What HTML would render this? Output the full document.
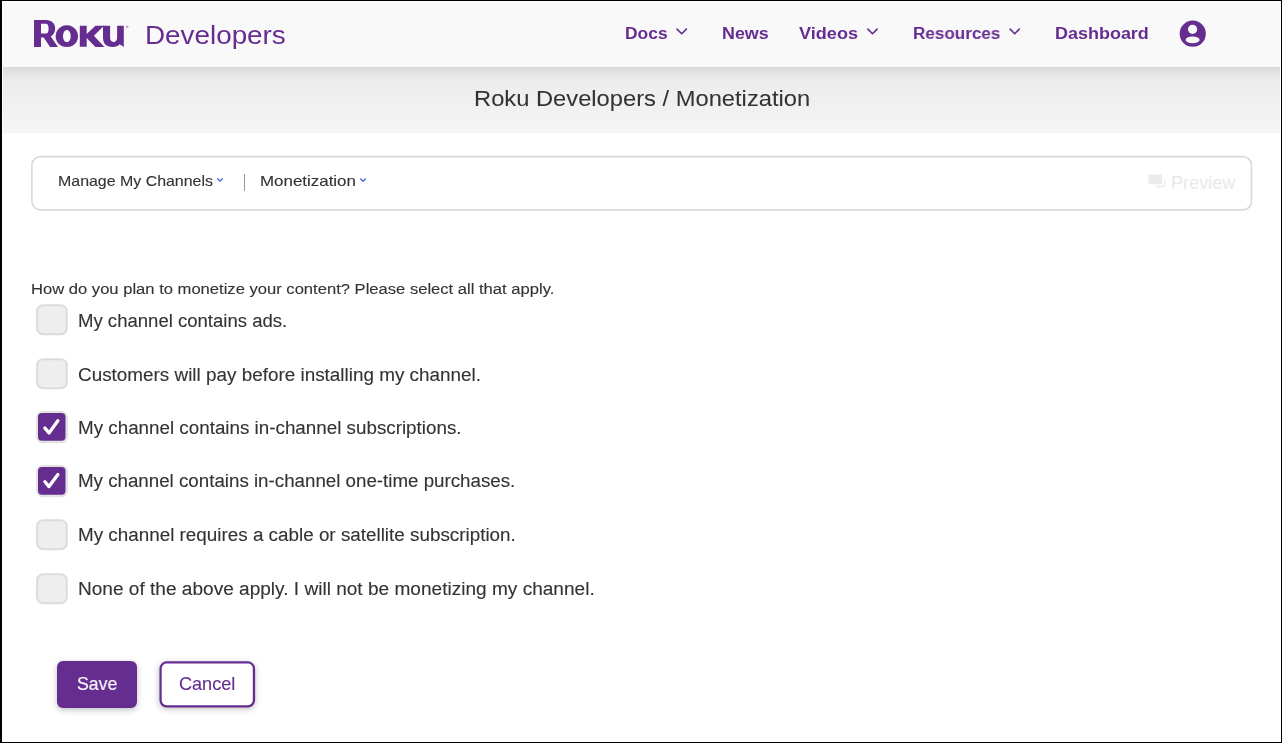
<!DOCTYPE html>
<html><head><meta charset="utf-8"><style>
html,body{margin:0;padding:0;}
body{width:1282px;height:743px;background:#000;position:relative;overflow:hidden;font-family:"Liberation Sans",sans-serif;}
.page{position:absolute;left:2px;top:1px;width:1279px;height:741px;background:#fff;overflow:hidden;}
.abs{position:absolute;}
.t{position:absolute;white-space:nowrap;line-height:1;will-change:transform;transform-origin:0 0;}
</style></head><body>
<div class="page"></div>
<div class="abs" style="left:3px;top:67px;width:1277px;height:66px;background:linear-gradient(#e9e9e9 0%,#eeeeee 35%,#f5f5f5 100%);"></div>
<div class="abs" style="left:3px;top:2px;width:1277px;height:65px;background:#f9f9f9;"></div>
<div class="abs" style="left:3px;top:67px;width:1277px;height:14px;background:linear-gradient(rgba(0,0,0,0.075),rgba(0,0,0,0.035) 35%,rgba(0,0,0,0));"></div>
<!-- card -->
<svg class="abs" style="left:0;top:0" width="1282" height="230"><rect x="31.9" y="156.6" width="1219.6" height="53.3" rx="8.5" ry="8.5" fill="#fff" stroke="#d9d9d9" stroke-width="1.6"/></svg>
<div class="abs" style="left:244px;top:174px;width:1px;height:17px;background:#999;"></div>
<!-- checkboxes -->
<svg class="abs" style="left:0;top:0" width="100" height="743">
<rect x="37.1" y="305.2" width="29.7" height="29.1" rx="6" fill="#eeeeee" stroke="#dcdcdc" stroke-width="2"/>
<rect x="37.1" y="359.2" width="29.7" height="29.1" rx="6" fill="#eeeeee" stroke="#dcdcdc" stroke-width="2"/>
<rect x="37.1" y="412.0" width="29.9" height="30.3" rx="5.5" fill="#e3e4e1" stroke="#e2e3e0" stroke-width="2"/>
<rect x="38" y="413.0" width="27.5" height="27.8" rx="4" fill="#662d91"/>
<rect x="37.1" y="466.0" width="29.9" height="30.3" rx="5.5" fill="#e3e4e1" stroke="#e2e3e0" stroke-width="2"/>
<rect x="38" y="467.0" width="27.5" height="27.8" rx="4" fill="#662d91"/>
<rect x="37.1" y="520.2" width="29.7" height="29.1" rx="6" fill="#eeeeee" stroke="#dcdcdc" stroke-width="2"/>
<rect x="37.1" y="574.2" width="29.7" height="29.1" rx="6" fill="#eeeeee" stroke="#dcdcdc" stroke-width="2"/>
</svg>

<!-- buttons -->
<div class="abs" style="left:57px;top:661px;width:80px;height:47px;border-radius:6px;background:#662d91;box-shadow:0 2px 6px rgba(0,0,0,0.25);"></div>
<div class="abs" style="left:159.4px;top:661.3px;width:95.7px;height:46.2px;border-radius:7px;background:#fff;box-shadow:0 2px 6px rgba(0,0,0,0.25);"></div>
<svg class="abs" style="left:0;top:640px" width="300" height="90"><rect x="160.55" y="22.45" width="93.4" height="43.9" rx="6" ry="6" fill="#fff" stroke="#662d91" stroke-width="2.3"/></svg>
<svg class="abs" style="left:0;top:0" width="1282" height="743" viewBox="0 0 1282 743">
<!-- Roku logo -->
<g fill="#662d91">
<path d="M34 20 H46 C51.5 20 55.2 23.5 55.2 28.5 C55.2 32.5 53 35.3 50.8 36.6 L58 47 H50.1 L43.7 37.5 H41 V47 H34 Z M41 23.8 V33.6 H46 C47.8 33.6 48.6 31.5 48.6 28.7 C48.6 25.9 47.8 23.8 46 23.8 Z" fill-rule="evenodd"/>
<path d="M66.85 25.2 A11.25 10.95 0 1 1 66.84 25.2 Z M66.85 30 A3.85 6.15 0 1 0 66.86 30 Z" fill-rule="evenodd"/>
<path d="M79.8 25.7 H86.7 V33.9 L95.4 25.7 H104 L93.9 35.8 L104.4 46.9 H95.4 L86.7 38.1 V46.7 H79.8 Z"/>
<path d="M103 25.7 H110.1 V37.5 C110.1 40.6 111.4 41.9 113.6 41.9 C115.8 41.9 117.1 40.6 117.1 37.5 V25.7 H123.8 V46.9 L119.6 44.2 C118.2 46 115.8 46.9 112.6 46.9 C106.2 46.9 103 43.6 103 37.8 Z"/>
</g>
<circle cx="127.2" cy="26.7" r="1.3" fill="#b9a3cc"/>
<!-- nav chevrons -->
<g fill="none" stroke="#662d91" stroke-width="1.6" stroke-linecap="round" stroke-linejoin="round">
<path d="M677 29.1 L681.7 33.8 L686.4 29.1"/>
<path d="M867.9 29.1 L872.5 33.8 L877.1 29.1"/>
<path d="M1010.1 29.1 L1014.7 33.8 L1019.3 29.1"/>
</g>
<!-- avatar -->
<circle cx="1192.75" cy="33.65" r="13.1" fill="#662d91"/>
<circle cx="1192.6" cy="29.3" r="4.6" fill="#f9f9f9"/>
<ellipse cx="1192.6" cy="39.9" rx="7" ry="3.35" fill="#f9f9f9"/>
<!-- small blue chevrons -->
<g fill="none" stroke="#3b6fd8" stroke-width="1.3" stroke-linecap="round" stroke-linejoin="round">
<path d="M217.6 178.8 L220 181 L222.4 178.8"/>
<path d="M360.6 179 L363 181.2 L365.4 179"/>
</g>
<!-- preview icon -->
<rect x="1148.4" y="174.4" width="13.6" height="9.8" rx="1.2" fill="#ebebeb"/>
<path d="M1164.5 181.3 V185.2 Q1164.5 186.6 1163.1 186.6 H1157" fill="none" stroke="#ebebeb" stroke-width="1.8" stroke-linecap="round"/>
<!-- checkmarks -->
<g fill="none" stroke="#fff" stroke-width="3.3" stroke-linecap="round" stroke-linejoin="round">
<path d="M44.9 428.1 L49 432.9 L57.9 420.8"/>
<path d="M44.9 481.8 L49 486.6 L57.9 474.5"/>
</g>
</svg>
<div class="t" style="left:144.77px;top:21.69px;font-size:26px;font-weight:400;color:#662d91;transform:scaleX(1.0705);">Developers</div>
<div class="t" style="left:624.78px;top:24.77px;font-size:17.4px;font-weight:700;color:#662d91;transform:scaleX(1.0014);">Docs</div>
<div class="t" style="left:721.75px;top:24.77px;font-size:17.4px;font-weight:700;color:#662d91;transform:scaleX(1.0276);">News</div>
<div class="t" style="left:799.12px;top:24.77px;font-size:17.4px;font-weight:700;color:#662d91;transform:scaleX(1.0402);">Videos</div>
<div class="t" style="left:912.70px;top:24.77px;font-size:17.4px;font-weight:700;color:#662d91;transform:scaleX(0.9816);">Resources</div>
<div class="t" style="left:1055.04px;top:24.77px;font-size:17.4px;font-weight:700;color:#662d91;transform:scaleX(1.0331);">Dashboard</div>
<div class="t" style="left:474.40px;top:87.96px;font-size:21.9px;font-weight:400;color:#333333;transform:scaleX(1.0835);-webkit-text-stroke:0.05px #333333;">Roku Developers / Monetization</div>
<div class="t" style="left:57.83px;top:174.27px;font-size:14.8px;font-weight:400;color:#333333;transform:scaleX(1.0764);-webkit-text-stroke:0.12px #333333;">Manage My Channels</div>
<div class="t" style="left:259.65px;top:174.27px;font-size:14.8px;font-weight:400;color:#333333;transform:scaleX(1.1436);-webkit-text-stroke:0.12px #333333;">Monetization</div>
<div class="t" style="left:1170.95px;top:173.71px;font-size:18.3px;font-weight:400;color:#e8e8e8;transform:scaleX(0.9908);-webkit-text-stroke:0.12px #e8e8e8;">Preview</div>
<div class="t" style="left:30.97px;top:280.96px;font-size:15.4px;font-weight:400;color:#333333;transform:scaleX(1.0775);-webkit-text-stroke:0.12px #333333;">How do you plan to monetize your content? Please select all that apply.</div>
<div class="t" style="left:77.82px;top:311.76px;font-size:18px;font-weight:400;color:#333333;transform:scaleX(1.0301);-webkit-text-stroke:0.12px #333333;">My channel contains ads.</div>
<div class="t" style="left:78.36px;top:365.56px;font-size:18px;font-weight:400;color:#333333;transform:scaleX(1.0490);-webkit-text-stroke:0.12px #333333;">Customers will pay before installing my channel.</div>
<div class="t" style="left:77.80px;top:419.26px;font-size:18px;font-weight:400;color:#333333;transform:scaleX(1.0444);-webkit-text-stroke:0.12px #333333;">My channel contains in-channel subscriptions.</div>
<div class="t" style="left:77.80px;top:472.36px;font-size:18px;font-weight:400;color:#333333;transform:scaleX(1.0406);-webkit-text-stroke:0.12px #333333;">My channel contains in-channel one-time purchases.</div>
<div class="t" style="left:77.79px;top:526.06px;font-size:18px;font-weight:400;color:#333333;transform:scaleX(1.0468);-webkit-text-stroke:0.12px #333333;">My channel requires a cable or satellite subscription.</div>
<div class="t" style="left:77.78px;top:579.86px;font-size:18px;font-weight:400;color:#333333;transform:scaleX(1.0589);-webkit-text-stroke:0.12px #333333;">None of the above apply. I will not be monetizing my channel.</div>
<div class="t" style="left:77.02px;top:676.33px;font-size:17.8px;font-weight:400;color:#ffffff;transform:scaleX(0.9922);-webkit-text-stroke:0.12px #ffffff;">Save</div>
<div class="t" style="left:179.09px;top:676.23px;font-size:17.8px;font-weight:400;color:#662d91;transform:scaleX(1.0169);-webkit-text-stroke:0.12px #662d91;">Cancel</div>

</body></html>
